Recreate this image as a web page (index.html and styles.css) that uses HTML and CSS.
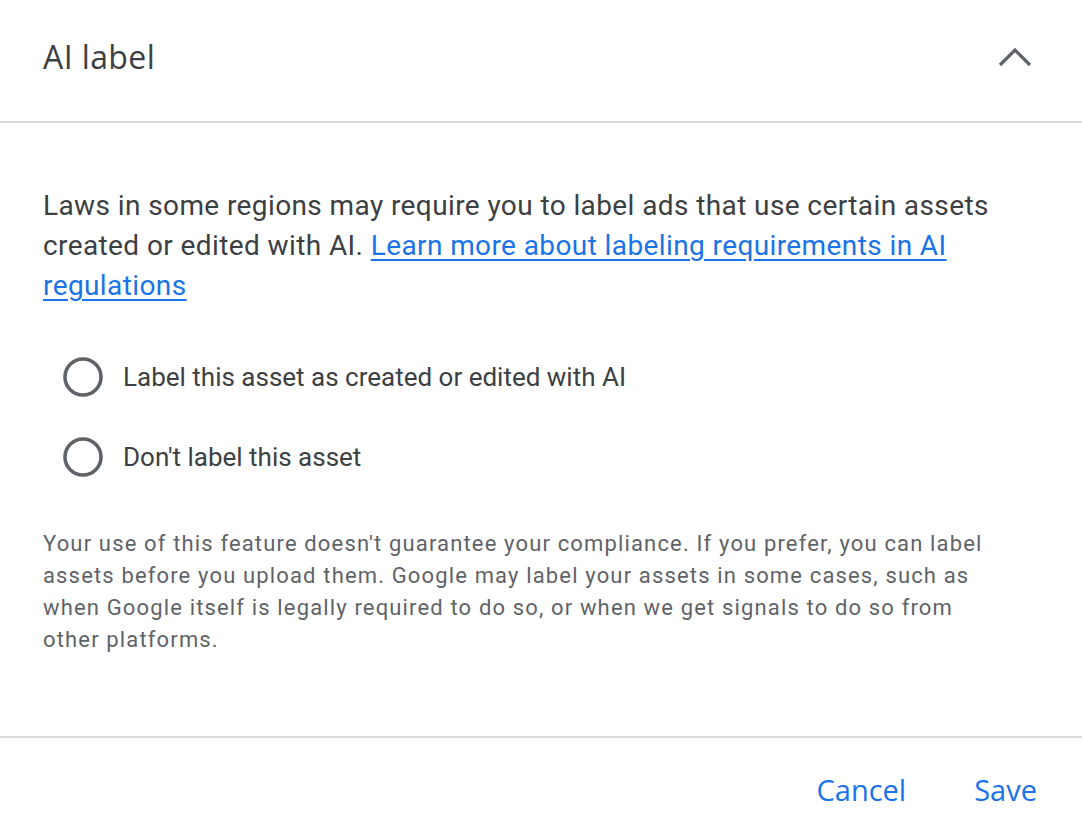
FILE: index.html
```html
<!DOCTYPE html>
<html lang="en">
<head>
    <meta charset="UTF-8">
    <meta name="viewport" content="width=device-width, initial-scale=1.0">
    <title>AI label</title>
    <link rel="stylesheet" href="styles.css">
</head>
<body>

<div class="panel">
    <!-- Cabeçalho -->
    <div class="panel-header">
        <h1>AI label</h1>
        <svg class="chevron" width="34" height="22" viewBox="0 0 34 22">
            <path d="M2 19 L17 4 L32 19" fill="none" stroke="#5f6368" stroke-width="3.2"/>
        </svg>
    </div>

    <!-- Conteúdo -->
    <div class="panel-body">
        <p class="intro">Laws in some regions may require you to label ads that use certain assets created or edited with AI. <a href="#">Learn more about labeling requirements in AI regulations</a></p>

        <div class="options">
            <label class="option">
                <svg class="radio" width="40" height="40" viewBox="0 0 40 40">
                    <circle cx="20" cy="20" r="18" fill="none" stroke="#5f6368" stroke-width="3.6"/>
                </svg>
                <span>Label this asset as created or edited with AI</span>
            </label>
            <label class="option">
                <svg class="radio" width="40" height="40" viewBox="0 0 40 40">
                    <circle cx="20" cy="20" r="18" fill="none" stroke="#5f6368" stroke-width="3.6"/>
                </svg>
                <span>Don't label this asset</span>
            </label>
        </div>

        <p class="note">Your use of this feature doesn't guarantee your compliance. If you prefer, you can label assets before you upload them. Google may label your assets in some cases, such as when Google itself is legally required to do so, or when we get signals to do so from other platforms.</p>
    </div>

    <!-- Rodapé -->
    <div class="panel-footer">
        <button class="text-button">Cancel</button>
        <button class="text-button">Save</button>
    </div>
</div>

</body>
</html>
```

FILE: styles.css
```css
body {
    margin: 0;
    padding: 0;
    background-color: #ffffff;
    font-family: Roboto, Arial, sans-serif;
}
.panel {
    width: 1082px;
}
.panel-header {
    height: 123px;
    box-sizing: border-box;
    display: flex;
    align-items: center;
    justify-content: space-between;
    padding: 0 50px 8px 43px;
    border-bottom: 2px solid #dadce0;
}
.panel-header h1 {
    margin: 0;
    font-family: "Open Sans", Arial, sans-serif;
    font-size: 32px;
    font-weight: 400;
    letter-spacing: 0.4px;
    color: #3c4043;
}
.chevron {
    display: block;
}
.panel-body {
    padding: 63px 43px 0 43px;
}
.intro {
    margin: 0;
    font-size: 28px;
    line-height: 40px;
    color: #3c4043;
    letter-spacing: 0.4px;
}
.intro a {
    color: #1a73e8;
    text-decoration: underline;
    text-underline-offset: 4px;
}
.options {
    margin-top: 31px;
    padding-left: 20px;
}
.option {
    display: flex;
    align-items: center;
    height: 80px;
    font-size: 26px;
    color: #3c4043;
}
.radio {
    display: block;
    margin-right: 20px;
}
.note {
    margin: 31px 0 0 0;
    max-width: 972px;
    font-size: 22px;
    line-height: 32px;
    color: #5f6368;
    letter-spacing: 1.15px;
}
.panel-footer {
    margin-top: 80px;
    border-top: 2px solid #dadce0;
    display: flex;
    justify-content: flex-end;
    padding: 22px 24px 0 0;
    gap: 26px;
}
.text-button {
    background: none;
    border: none;
    padding: 10px 21px;
    font-family: "Open Sans", Arial, sans-serif;
    font-size: 29px;
    font-weight: 500;
    color: #1a73e8;
    cursor: pointer;
}
```
